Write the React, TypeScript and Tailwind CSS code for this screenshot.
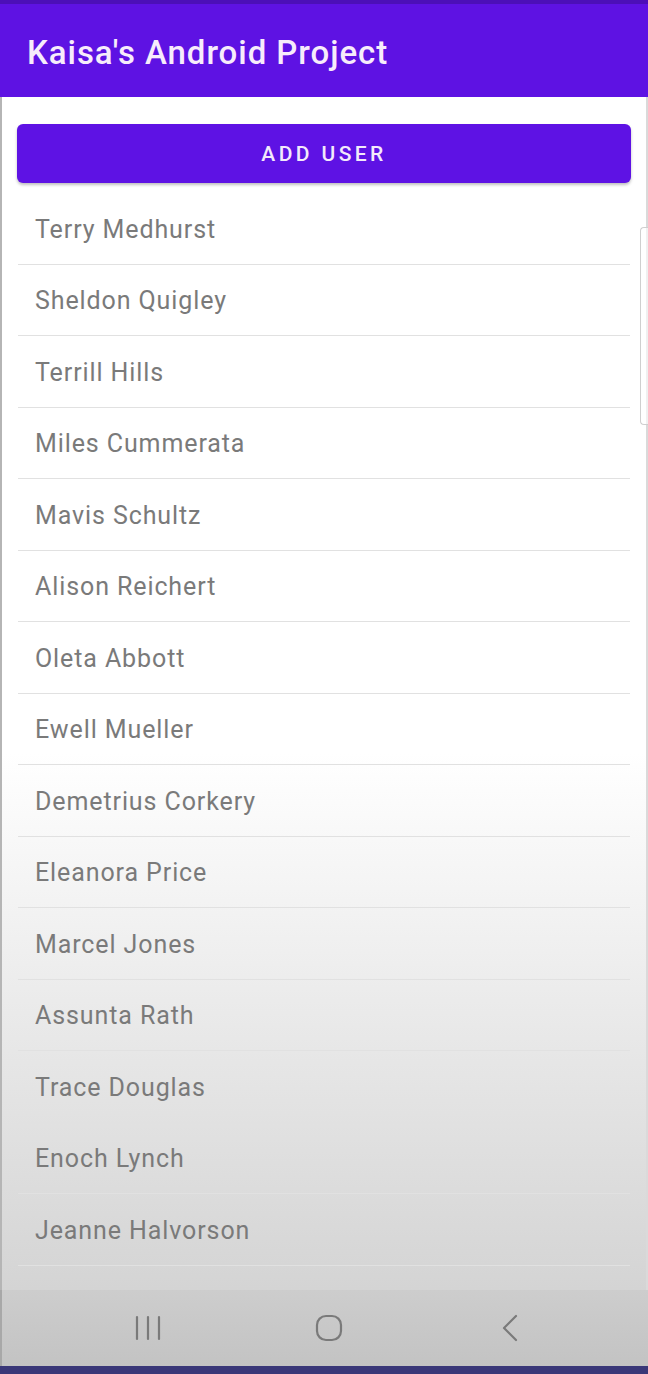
const USERS = [
  "Terry Medhurst",
  "Sheldon Quigley",
  "Terrill Hills",
  "Miles Cummerata",
  "Mavis Schultz",
  "Alison Reichert",
  "Oleta Abbott",
  "Ewell Mueller",
  "Demetrius Corkery",
  "Eleanora Price",
  "Marcel Jones",
  "Assunta Rath",
  "Trace Douglas",
  "Enoch Lynch",
  "Jeanne Halvorson",
];

export default function App() {
  return (
    <div
      className="w-[648px] h-[1374px] flex flex-col overflow-hidden bg-white"
      style={{ fontFamily: "Roboto, 'Liberation Sans', sans-serif" }}
    >
      {/* App bar */}
      <header className="h-[97px] shrink-0 flex flex-col bg-[#5e12e3]">
        <div className="h-[4px] bg-[#4c0fb8]" />
        <div className="flex-1 flex items-center pl-[27px] pt-[4px]">
          <h1 className="text-[33px] font-medium text-[#f7ecfb] tracking-[0.95px]">
            Kaisa's Android Project
          </h1>
        </div>
      </header>

      {/* Content */}
      <main className="relative flex-1 flex flex-col border-l-2 border-r-2 border-l-[#b5b5b5] border-r-[#dadada] bg-gradient-to-b from-white via-white via-[55%] to-[#d4d4d4]">
        <div className="px-[15px] pt-[27px]">
          <button className="w-full h-[59px] pt-[3px] rounded-[6px] bg-[#5e12e4] shadow-[0_2px_3px_rgba(0,0,0,0.25)] text-[21px] font-medium tracking-[3.4px] text-[#f3e9fb]">
            ADD USER
          </button>
        </div>

        <ul className="mt-[10px] px-[16px]">
          {USERS.map((name) => (
            <li
              key={name}
              className="h-[71.5px] flex items-center pl-[17px] pt-[2px] border-b border-[#e1e1e1] text-[25px] tracking-[0.9px] text-[#7a7a7a]"
            >
              {name}
            </li>
          ))}
        </ul>

        {/* Scrollbar */}
        <div className="absolute right-[-2px] top-[130px] w-[8px] h-[198px] rounded-l-[4px] border border-r-0 border-[#cfcfcf] bg-white/60" />
      </main>

      {/* Navigation bar */}
      <nav className="h-[76px] shrink-0 flex items-center pl-[55px] bg-gradient-to-b from-[#cdcdcd] to-[#c3c3c3] border-l-2 border-[#a8a8a8]">
        <div className="w-[181px] flex justify-center">
          <svg width="28" height="28" viewBox="0 0 28 28" className="text-[#7a7a7a]">
            <g stroke="currentColor" strokeWidth="2.2" strokeLinecap="round">
              <line x1="3" y1="3" x2="3" y2="25" />
              <line x1="14" y1="3" x2="14" y2="25" />
              <line x1="25" y1="3" x2="25" y2="25" />
            </g>
          </svg>
        </div>
        <div className="w-[181px] flex justify-center">
          <svg width="28" height="28" viewBox="0 0 28 28" className="text-[#7a7a7a]">
            <rect x="2" y="2" width="24" height="24" rx="9" fill="none" stroke="currentColor" strokeWidth="2.2" />
          </svg>
        </div>
        <div className="w-[181px] flex justify-center">
          <svg width="28" height="28" viewBox="0 0 28 28" className="text-[#7a7a7a]">
            <polyline points="20,2 8,14 20,26" fill="none" stroke="currentColor" strokeWidth="2.2" strokeLinecap="round" strokeLinejoin="round" />
          </svg>
        </div>
      </nav>
      <div className="h-[8px] shrink-0 bg-[#3a3778]" />
    </div>
  );
}
